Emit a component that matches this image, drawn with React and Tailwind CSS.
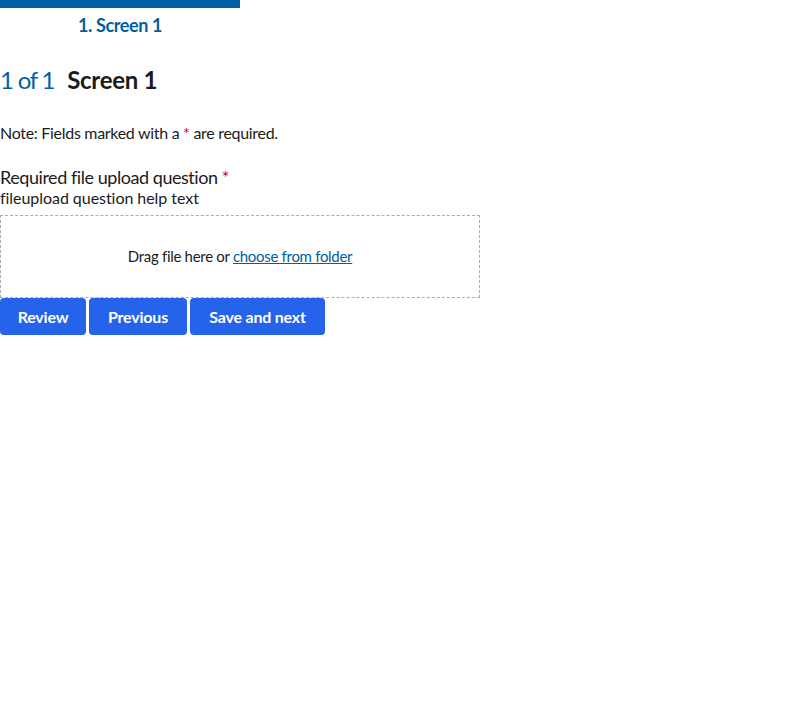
import React from "react";

export default function App() {
  return (
    <div className="bg-white min-h-[720px] text-[#1b1b1b]">
      <div className="font-['Lato','Liberation_Sans',sans-serif]">
        <div className="w-[240px]">
          <div className="h-[8px] bg-[#005ea2]"></div>
          <div className="text-center text-[18px] font-bold text-[#005ea2] leading-[34px] tracking-[-0.4px]">1. Screen 1</div>
        </div>
        <h2 className="mt-[23px] flex items-baseline text-[24px] leading-[30px]">
          <span className="text-[#005ea2] font-normal tracking-[-1.2px]">1 of 1</span>
          <span className="ml-[13px] font-bold tracking-[-0.3px]">Screen 1</span>
        </h2>
        <p className="mt-[28px] text-[16px] leading-[20px] tracking-[-0.3px]">
          Note: Fields marked with a <span className="text-[#b50909]">*</span> are required.
        </p>
        <div className="mt-[23px] text-[18px] leading-[22px] tracking-[-0.45px]">
          Required file upload question <span className="text-[#b50909]">*</span>
        </div>
        <div className="text-[16px] leading-[20px] tracking-[-0.05px]">fileupload question help text</div>
        <div className="mt-[7px] w-[480px] h-[83px] border border-dashed border-[#a9aeb1] flex items-center justify-center text-[15px] tracking-[-0.3px]">
          <span>
            Drag file here or <span className="text-[#005ea2] underline">choose from folder</span>
          </span>
        </div>
        <div className="flex gap-[3px]">
          <button className="h-[37px] w-[86px] bg-[#2563eb] text-white font-bold text-[16px] rounded-[4px] tracking-[-0.2px]">Review</button>
          <button className="h-[37px] w-[98px] bg-[#2563eb] text-white font-bold text-[16px] rounded-[4px] tracking-[-0.2px]">Previous</button>
          <button className="h-[37px] w-[135px] bg-[#2563eb] text-white font-bold text-[16px] rounded-[4px] tracking-[-0.2px]">Save and next</button>
        </div>
      </div>
    </div>
  );
}
